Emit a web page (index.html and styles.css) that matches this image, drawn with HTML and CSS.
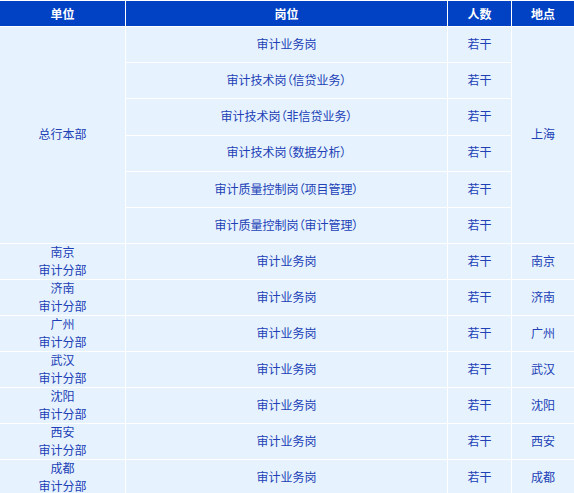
FILE: index.html
```html
<!DOCTYPE html>
<html lang="zh">
<head>
<meta charset="utf-8">
<link rel="stylesheet" href="styles.css">
</head>
<body>
<div class="grid">
  <div class="hd">单位</div>
  <div class="hd">岗位</div>
  <div class="hd">人数</div>
  <div class="hd">地点</div>

  <div class="c span6 c1">总行本部</div>
  <div class="c">审计业务岗</div>
  <div class="c">若干</div>
  <div class="c span6 c4">上海</div>

  <div class="c">审计技术岗<span class="p">（</span>信贷业务<span class="p">）</span></div>
  <div class="c">若干</div>
  <div class="c">审计技术岗<span class="p">（</span>非信贷业务<span class="p">）</span></div>
  <div class="c">若干</div>
  <div class="c">审计技术岗<span class="p">（</span>数据分析<span class="p">）</span></div>
  <div class="c">若干</div>
  <div class="c">审计质量控制岗<span class="p">（</span>项目管理<span class="p">）</span></div>
  <div class="c">若干</div>
  <div class="c">审计质量控制岗<span class="p">（</span>审计管理<span class="p">）</span></div>
  <div class="c">若干</div>

  <div class="c two">南京<br>审计分部</div>
  <div class="c">审计业务岗</div>
  <div class="c">若干</div>
  <div class="c">南京</div>

  <div class="c two">济南<br>审计分部</div>
  <div class="c">审计业务岗</div>
  <div class="c">若干</div>
  <div class="c">济南</div>

  <div class="c two">广州<br>审计分部</div>
  <div class="c">审计业务岗</div>
  <div class="c">若干</div>
  <div class="c">广州</div>

  <div class="c two">武汉<br>审计分部</div>
  <div class="c">审计业务岗</div>
  <div class="c">若干</div>
  <div class="c">武汉</div>

  <div class="c two">沈阳<br>审计分部</div>
  <div class="c">审计业务岗</div>
  <div class="c">若干</div>
  <div class="c">沈阳</div>

  <div class="c two">西安<br>审计分部</div>
  <div class="c">审计业务岗</div>
  <div class="c">若干</div>
  <div class="c">西安</div>

  <div class="c two">成都<br>审计分部</div>
  <div class="c">审计业务岗</div>
  <div class="c">若干</div>
  <div class="c">成都</div>
</div>
</body>
</html>
```

FILE: styles.css
```css
html, body {
  margin: 0;
  padding: 0;
  background: #ffffff;
}
body {
  font-family: "Noto Sans CJK SC", "Noto Sans", sans-serif;
  font-size: 12px;
}
.grid {
  display: grid;
  grid-template-columns: 125px 321px 63px 62px;
  grid-template-rows: 25px repeat(6, 35.2px) repeat(7, 35px);
  gap: 1px;
  padding-top: 1px;
  background: #ffffff;
  width: 574px;
}
.hd {
  background: #0141c4;
  color: #ffffff;
  font-weight: bold;
  display: flex;
  align-items: center;
  justify-content: center;
}
.c {
  background: #e6f3fe;
  color: #2140b6;
  display: flex;
  align-items: center;
  justify-content: center;
  text-align: center;
  line-height: 17.5px;
  padding-bottom: 2px;
  box-sizing: border-box;
}
.p {
  font-feature-settings: "palt";
}
.span6 {
  grid-row: span 6;
}
.c1 {
  grid-column: 1;
}
.c4 {
  grid-column: 4;
}
.two {
  flex-direction: column;
}
```
